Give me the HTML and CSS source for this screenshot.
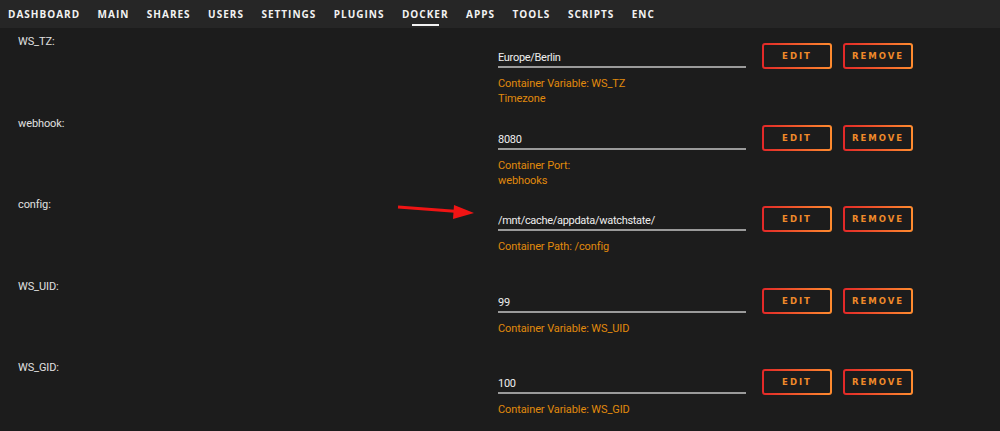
FILE: index.html
```html
<!DOCTYPE html>
<html lang="en">

<head>
    <meta charset="UTF-8">
    <meta name="viewport" content="width=device-width, initial-scale=1.0">
    <title>Docker - Edit Container</title>
    <link rel="stylesheet" href="styles.css">
</head>

<body>
    <nav class="menu">
        <a href="#">Dashboard</a>
        <a href="#">Main</a>
        <a href="#">Shares</a>
        <a href="#">Users</a>
        <a href="#">Settings</a>
        <a href="#">Plugins</a>
        <a href="#" class="active">Docker</a>
        <a href="#">Apps</a>
        <a href="#">Tools</a>
        <a href="#">Scripts</a>
        <a href="#">Enc</a>
    </nav>

    <div class="config-list">
        <div class="config-row">
            <div class="label">WS_TZ:</div>
            <div class="field">
                <div class="value-line">
                    <input class="value" type="text" value="Europe/Berlin">
                    <button class="btn">Edit</button>
                    <button class="btn">Remove</button>
                </div>
                <div class="desc">Container Variable: WS_TZ<br>Timezone</div>
            </div>
        </div>

        <div class="config-row">
            <div class="label">webhook:</div>
            <div class="field">
                <div class="value-line">
                    <input class="value" type="text" value="8080">
                    <button class="btn">Edit</button>
                    <button class="btn">Remove</button>
                </div>
                <div class="desc">Container Port:<br>webhooks</div>
            </div>
        </div>

        <div class="config-row">
            <div class="label">config:</div>
            <div class="field">
                <svg class="arrow" width="90" height="20" viewBox="0 0 90 20">
                    <line x1="2" y1="7" x2="62" y2="11.5" stroke="#f01414" stroke-width="3" />
                    <polygon points="78,13 58,5 57,19" fill="#f01414" />
                </svg>
                <div class="value-line">
                    <input class="value" type="text" value="/mnt/cache/appdata/watchstate/">
                    <button class="btn">Edit</button>
                    <button class="btn">Remove</button>
                </div>
                <div class="desc">Container Path: /config</div>
            </div>
        </div>

        <div class="config-row">
            <div class="label">WS_UID:</div>
            <div class="field">
                <div class="value-line">
                    <input class="value" type="text" value="99">
                    <button class="btn">Edit</button>
                    <button class="btn">Remove</button>
                </div>
                <div class="desc">Container Variable: WS_UID</div>
            </div>
        </div>

        <div class="config-row">
            <div class="label">WS_GID:</div>
            <div class="field">
                <div class="value-line">
                    <input class="value" type="text" value="100">
                    <button class="btn">Edit</button>
                    <button class="btn">Remove</button>
                </div>
                <div class="desc">Container Variable: WS_GID</div>
            </div>
        </div>
    </div>
</body>

</html>
```

FILE: styles.css
```css
* {
    margin: 0;
    padding: 0;
    box-sizing: border-box;
}

body {
    background: #1c1c1c;
    color: #e4e4e4;
    font-family: Roboto, 'Open Sans', sans-serif;
    overflow: hidden;
}

.menu {
    display: flex;
    gap: 17.5px;
    height: 28px;
    padding: 0 8px;
    background: #262626;
    align-items: center;
}

.menu a {
    position: relative;
    color: #f2f2f2;
    text-decoration: none;
    text-transform: uppercase;
    font-family: 'Open Sans', sans-serif;
    font-weight: bold;
    font-size: 10px;
    letter-spacing: 1px;
}

.menu a.active::after {
    content: '';
    position: absolute;
    left: 10px;
    right: 10px;
    bottom: -5px;
    height: 2px;
    background: #f2f2f2;
}

.config-list {
    padding-top: 6px;
}

.config-row {
    display: grid;
    grid-template-columns: 480px 1fr;
    height: 81.5px;
    padding-left: 18px;
}

.label {
    font-size: 11px;
    letter-spacing: -0.1px;
    line-height: 16px;
    color: #e0e0e0;
}

.field {
    position: relative;
    padding-top: 9px;
}

.value-line {
    display: flex;
    align-items: center;
}

.value {
    width: 248px;
    height: 24px;
    margin-right: 16px;
    background: transparent;
    border: none;
    border-bottom: 2px solid #9a9a9a;
    color: #eeeeee;
    font-family: Roboto, 'Open Sans', sans-serif;
    font-size: 11px;
    letter-spacing: -0.3px;
    padding: 5px 0 0 0;
    outline: none;
}

.btn {
    width: 70px;
    height: 26px;
    margin-right: 11px;
    background:
        linear-gradient(#1c1c1c, #1c1c1c) padding-box,
        linear-gradient(90deg, #e22828, #ff8c2f) border-box;
    border: 2px solid transparent;
    border-radius: 3px;
    color: #f08a2a;
    font-family: 'DejaVu Sans', sans-serif;
    font-weight: bold;
    font-size: 8.5px;
    letter-spacing: 2px;
    text-transform: uppercase;
    cursor: pointer;
}

.desc {
    margin-top: 7px;
    color: #e08a0c;
    font-size: 11px;
    letter-spacing: -0.1px;
    line-height: 15px;
}

.arrow {
    position: absolute;
    left: -102px;
    top: 3px;
}
```
